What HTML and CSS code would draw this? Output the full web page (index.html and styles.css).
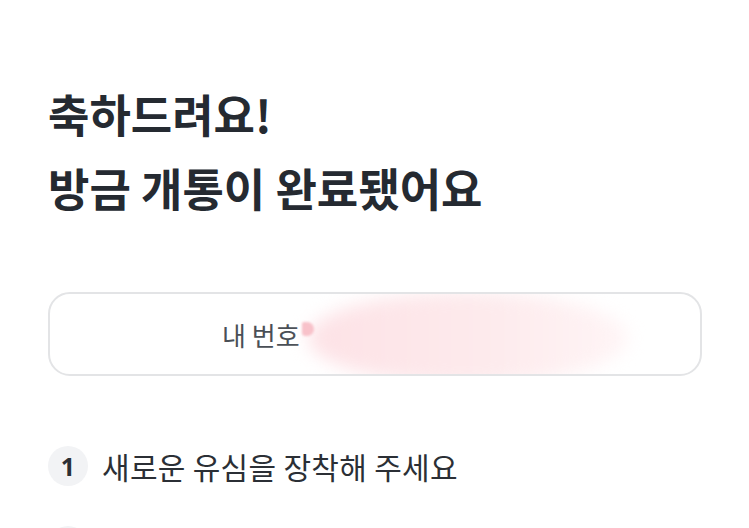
FILE: index.html
```html
<!DOCTYPE html>
<html>
<head>
  <title>개통 완료</title>
  <link rel="stylesheet" href="styles.css">
</head>
<body>
  <div class="page">
    <h1 class="title">축하드려요!<br>방금 개통이 완료됐어요</h1>

    <div class="number-box">
      <span class="number-label">내 번호</span>
      <span class="number-value">010-0000-0000</span>
      <div class="mask"></div>
      <div class="mask-dot"></div>
    </div>

    <ol class="steps">
      <li class="step">
        <span class="step-num">1</span>
        <span class="step-text">새로운 유심을 장착해 주세요</span>
      </li>
      <li class="step">
        <span class="step-num"></span>
      </li>
    </ol>
  </div>
</body>
</html>
```

FILE: styles.css
```css
body {
  margin: 0;
  background: #fff;
  font-family: "Noto Sans CJK KR", "Noto Sans", sans-serif;
  color: #252a31;
  overflow: hidden;
}

.page {
  padding: 77px 47px 0 48px;
}

.title {
  margin: 0;
  font-size: 45px;
  font-weight: 700;
  line-height: 74px;
  letter-spacing: 0;
}

.number-box {
  position: relative;
  margin-top: 67px;
  height: 80px;
  border: 2px solid #e3e4e6;
  border-radius: 22px;
  display: flex;
  align-items: center;
  padding-left: 172px;
  overflow: hidden;
}

.number-label {
  font-size: 26px;
  color: #4a4f56;
}

.number-value {
  margin-left: 10px;
  font-size: 24px;
  color: transparent;
}

.mask {
  position: absolute;
  left: 258px;
  top: -2px;
  width: 320px;
  height: 92px;
  border-radius: 50%;
  background: linear-gradient(90deg, #fde2e6 0%, #fdeaec 55%, #fff5f6 100%);
  filter: blur(9px);
}

.mask-dot {
  position: absolute;
  left: 252px;
  top: 28px;
  width: 12px;
  height: 14px;
  background: #f8c2ca;
  border-radius: 2px 8px 8px 4px;
  filter: blur(1px);
}

.steps {
  list-style: none;
  margin: 70px 0 0;
  padding: 0;
}

.step {
  display: flex;
  align-items: center;
  height: 40px;
  margin-bottom: 40px;
}

.step-num {
  width: 40px;
  height: 40px;
  border-radius: 50%;
  background: #f2f3f5;
  display: flex;
  align-items: center;
  justify-content: center;
  font-family: "Open Sans", sans-serif;
  font-size: 25px;
  font-weight: 700;
  color: #2b2f35;
}

.step-text {
  margin-left: 14px;
  font-size: 30px;
  color: #2b2f35;
  letter-spacing: 0.3px;
}
```
